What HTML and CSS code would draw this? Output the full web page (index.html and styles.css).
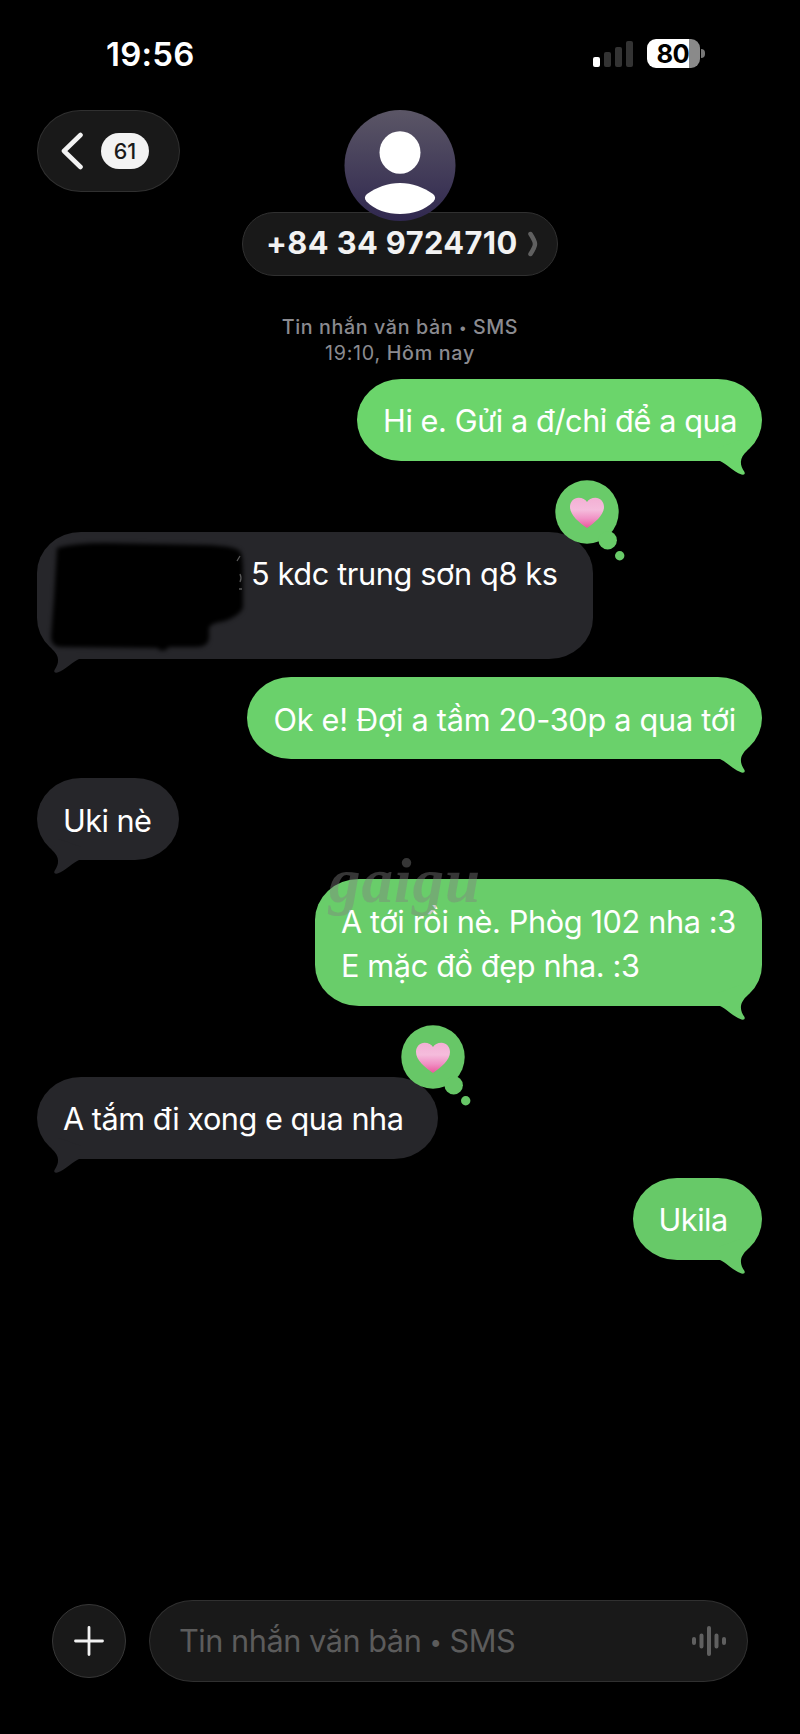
FILE: index.html
```html
<!DOCTYPE html>
<html lang="vi">
<head>
<meta charset="utf-8">
<title>Tin nhắn</title>
<link rel="stylesheet" href="styles.css">
</head>
<body>
<svg width="0" height="0" class="defs" aria-hidden="true">
  <defs>
    <symbol id="tail" viewBox="0 0 46 40">
      <path d="M4 23C10 25.500 17 33.500 25.500 36.500Q29.700 37.200 28.500 34C24 27.500 22.500 20.500 31.500 12.500L24 2L2 10V23Z"/>
    </symbol>
    <linearGradient id="heartFill" x1="0" y1="0" x2="0" y2="1">
      <stop offset="0" stop-color="#f3b0d4"/>
      <stop offset="0.4" stop-color="#f5bcdc"/>
      <stop offset="0.7" stop-color="#f090c4"/>
      <stop offset="1" stop-color="#ea569c"/>
    </linearGradient>
    <symbol id="reaction" viewBox="0 0 72 84">
      <circle cx="32" cy="32" r="31.700"/>
      <circle cx="52.700" cy="60.300" r="9.200"/>
      <circle cx="64.700" cy="75.700" r="4.700"/>
      <path fill="url(#heartFill)" d="M32 48C24 42.500 15 35 15 27C15 21.500 19 17.700 23.500 17.700C27.500 17.700 30.500 19.500 32 22C33.500 19.500 36.500 17.700 40.500 17.700C45 17.700 49 21.500 49 27C49 35 40 42.500 32 48Z"/>
    </symbol>
  </defs>
</svg>
<div class="phone">
  <header class="status">
    <span class="clock">19:56</span>
    <div class="indicators">
      <div class="signal"><i class="on b1"></i><i class="b2"></i><i class="b3"></i><i class="b4"></i></div>
      <div class="battery"><span>80</span></div>
      <div class="nub"></div>
    </div>
  </header>

  <nav class="top">
    <div class="back">
      <svg class="back-arrow" viewBox="0 0 24 38"><path d="M20.500 3L4 19L20.500 35"/></svg>
      <span class="unread">61</span>
    </div>
    <div class="contact">
      <svg class="avatar" viewBox="0 0 112 112">
        <defs><linearGradient id="av" x1="0" y1="0" x2="0" y2="1"><stop offset="0" stop-color="#5b5666"/><stop offset="1" stop-color="#30284f"/></linearGradient></defs>
        <circle cx="56" cy="55.500" r="55.500" fill="url(#av)"/>
        <ellipse cx="56" cy="42.500" rx="20.500" ry="21.300" fill="#fff"/>
        <path fill="#fff" d="M56 73C68 73 80 77.500 89 84Q93 87.500 89.500 91.500C81 100 69 104 56 104S31 100 22.500 91.500Q19 87.500 23 84C32 77.500 44 73 56 73Z"/>
      </svg>
      <div class="name"><span class="num">+84 34 9724710</span><svg class="more" viewBox="0 0 12 26"><path d="M3.500 3Q8 10 8 13Q8 16 3.500 23"/></svg></div>
    </div>
  </nav>

  <div class="stamp">
    <div class="kind">Tin nhắn văn bản <span class="dot">•</span> SMS</div>
    <div class="when"><span class="thin">19:10,</span> Hôm nay</div>
  </div>

  <main class="thread">
    <div class="msg out g1">Hi e. Gửi a đ/chỉ để a qua<svg class="tail"><use href="#tail"/></svg></div>
    <div class="msg in tall spaced addr">5 kdc trung sơn q8 ks<svg class="tail"><use href="#tail"/></svg>
      <svg class="scribble" viewBox="0 0 210 120"><path d="M12 12Q30 7 60 7L160 9Q194 10 196 17Q198 22 198 38V72Q194 80 180 85Q165 87 164 92V103Q162 111 152 111H124Q118 118 112 112L16 111Q6 111 6 100L9 62Z"/></svg>
      <svg class="stray" viewBox="0 0 8 40"><path d="M2 7L5 2M5 20Q7 24 5 28M4 35H7"/></svg>
      <svg class="reaction r1"><use href="#reaction"/></svg>
    </div>
    <div class="msg out g2">Ok e! Đợi a tầm 20-30p a qua tới<svg class="tail"><use href="#tail"/></svg></div>
    <div class="msg in uki">Uki nè<svg class="tail"><use href="#tail"/></svg></div>
    <div class="msg out tall g3">A tới rồi nè. Phòg 102 nha :3<br>E mặc đồ đẹp nha. :3<svg class="tail"><use href="#tail"/></svg>
      <span class="mark">gaigu</span>
    </div>
    <div class="msg in spaced bath">A tắm đi xong e qua nha<svg class="tail"><use href="#tail"/></svg>
      <svg class="reaction r2"><use href="#reaction"/></svg>
    </div>
    <div class="msg out g4">Ukila<svg class="tail"><use href="#tail"/></svg></div>
  </main>

  <footer class="composer">
    <div class="plus"><svg viewBox="0 0 30 30"><path d="M15 1.500V28.500M1.500 15H28.500"/></svg></div>
    <div class="field"><span>Tin nhắn văn bản <span class="dot">•</span> SMS</span>
      <svg class="wave" viewBox="0 0 36 32"><path d="M3 14V18M10.500 10.500V21.500M18 3V29M25.500 10.500V21.500M33 14V18"/></svg>
    </div>
  </footer>
</div>
</body>
</html>
```
FILE: styles.css
```css
* { box-sizing: border-box; }
body {
  margin: 0;
  background: #000;
  color: #fff;
  font-family: Inter, "Noto Sans", sans-serif;
}
.defs { position: absolute; }
.phone {
  width: 800px;
  height: 1734px;
  display: flex;
  flex-direction: column;
  overflow: hidden;
}

/* status bar */
.status {
  height: 110px;
  padding: 33px 95px 0 106px;
  display: flex;
  justify-content: space-between;
  align-items: flex-start;
}
.clock { font-size: 33px; line-height: 42px; font-weight: 600; letter-spacing: 0.2px; }
.indicators { display: flex; padding-top: 6px; }
.signal { display: flex; gap: 4px; align-items: flex-end; height: 28px; margin-right: 14px; }
.signal i { width: 7px; border-radius: 2px; background: #333; }
.signal .on { background: #fff; }
.b1 { height: 10px; }
.b2 { height: 15px; }
.b3 { height: 20px; }
.b4 { height: 26px; }
.battery {
  width: 53px;
  height: 29px;
  border-radius: 9px;
  background: linear-gradient(90deg, #fff 42px, #8a8a8a 42px);
  color: #000;
  font-size: 25.500px;
  font-weight: 700;
  line-height: 29px;
  padding-left: 9.500px;
  letter-spacing: -0.5px;
}
.nub { width: 4px; height: 9px; margin: 10px 0 0 1px; border-radius: 0 4px 4px 0; background: #777; }

/* top navigation */
.top {
  height: 166px;
  padding: 0 37px;
  display: grid;
  grid-template-columns: 143px 1fr 143px;
}
.back {
  height: 82px;
  border: 1.5px solid #303030;
  border-radius: 44px / 41px;
  background: #191919;
  display: flex;
  align-items: center;
  padding-left: 22px;
  gap: 17px;
}
.back-arrow { width: 24px; height: 38px; fill: none; stroke: #f2f2f2; stroke-width: 4.600; stroke-linecap: round; stroke-linejoin: round; }
.unread {
  width: 48px;
  height: 36px;
  border-radius: 18px;
  background: #f2f2f2;
  color: #191919;
  font-size: 21.500px;
  font-weight: 500;
  line-height: 37px;
  text-align: center;
}
.contact { display: flex; flex-direction: column; align-items: center; }
.avatar { width: 112px; height: 112px; position: relative; z-index: 1; }
.name {
  margin-top: -10px;
  width: 316px;
  height: 64px;
  flex: none;
  border: 1.5px solid #303030;
  border-radius: 32px;
  background: #191919;
  display: flex;
  align-items: center;
  padding: 0 0 3px 23px;
  font-size: 30.800px;
  font-weight: 700;
  letter-spacing: 0.4px;
  color: #f2f2f2;
  white-space: nowrap;
}
.more { width: 12px; height: 26px; margin: 3px 0 0 9px; fill: none; stroke: #606060; stroke-width: 4.500; stroke-linecap: round; }

/* conversation */
.stamp {
  padding-top: 38px;
  height: 103px;
  text-align: center;
  color: #8b8b90;
  font-size: 19.700px;
  font-weight: 450;
  line-height: 26px;
}
.kind { letter-spacing: 0.6px; }
.when { letter-spacing: 0.7px; }
.thin { font-weight: 400; }
.dot { font-size: 0.72em; line-height: 1; vertical-align: 0.1em; }
.thread {
  display: flex;
  flex-direction: column;
  gap: 19px;
  padding: 0 38px 0 37px;
  height: 1100px;
}
.msg {
  position: relative;
  height: 82px;
  padding: 20px 26px 0 26px;
  border-radius: 44px / 41px;
  font-size: 30.700px;
  line-height: 44px;
  white-space: nowrap;
}
.tall { height: 127px; border-radius: 44px / 41px; }
.spaced { margin-top: 52px; }
.out { align-self: flex-end; }
.in { align-self: flex-start; background: #26262a; fill: #26262a; }
.g1 { width: 405px; background: #6bd56b; fill: #6bd56b; letter-spacing: -0.42px; }
.g2 { width: 515px; margin-top: -1px; padding-top: 21px; padding-left: 26.500px; background: #6ad16b; fill: #6ad16b; letter-spacing: -0.28px; }
.g3 { width: 447px; padding-top: 21px; background: #69cd6a; fill: #69cd6a; letter-spacing: -0.37px; }
.g4 { width: 129px; padding-left: 25.500px; background: #67c968; fill: #67c968; letter-spacing: -0.5px; }
.addr { width: 556px; padding-left: 214px; letter-spacing: -0.37px; }
.uki { width: 142px; padding-top: 21px; letter-spacing: -0.55px; }
.bath { width: 401px; letter-spacing: -0.48px; }
.tail { position: absolute; right: 0; bottom: -17px; width: 46px; height: 40px; }
.in .tail { right: auto; left: 0; transform: scaleX(-1); }
.reaction { position: absolute; width: 72px; height: 84px; top: -52px; }
.r1 { left: 518px; fill: #69cb69; }
.r2 { left: 364px; fill: #67c767; }
.scribble { position: absolute; left: 8px; top: 4px; width: 210px; height: 120px; fill: #000; filter: blur(2px); }
.stray { position: absolute; left: 198px; top: 22px; width: 8px; height: 40px; fill: none; stroke: #5a5a5a; stroke-width: 1.300; }
.mark {
  position: absolute;
  left: 14px;
  top: -30px;
  font: italic 700 63px/64px "Liberation Serif", serif;
  letter-spacing: 1px;
  color: rgba(128, 128, 128, 0.42);
}

/* composer */
.composer {
  display: flex;
  align-items: center;
  flex: none;
  margin-top: 120px;
  padding: 0 52px;
  height: 83px;
}
.plus {
  width: 74px;
  height: 74px;
  border: 1.500px solid #383838;
  border-radius: 50%;
  background: #191919;
  display: grid;
  place-items: center;
}
.plus svg { width: 30px; height: 30px; stroke: #f2f2f2; stroke-width: 2.800; stroke-linecap: round; }
.field {
  width: 599px;
  height: 82px;
  margin-left: 23px;
  border: 1.500px solid #303030;
  border-radius: 44px / 41px;
  background: #191919;
  display: flex;
  align-items: center;
  justify-content: space-between;
  padding: 0 20px 0 29px;
  color: #5c5c5c;
  font-size: 30.700px;
  letter-spacing: -0.47px;
}
.wave { width: 36px; height: 32px; stroke: #606060; stroke-width: 4; stroke-linecap: round; }
```
